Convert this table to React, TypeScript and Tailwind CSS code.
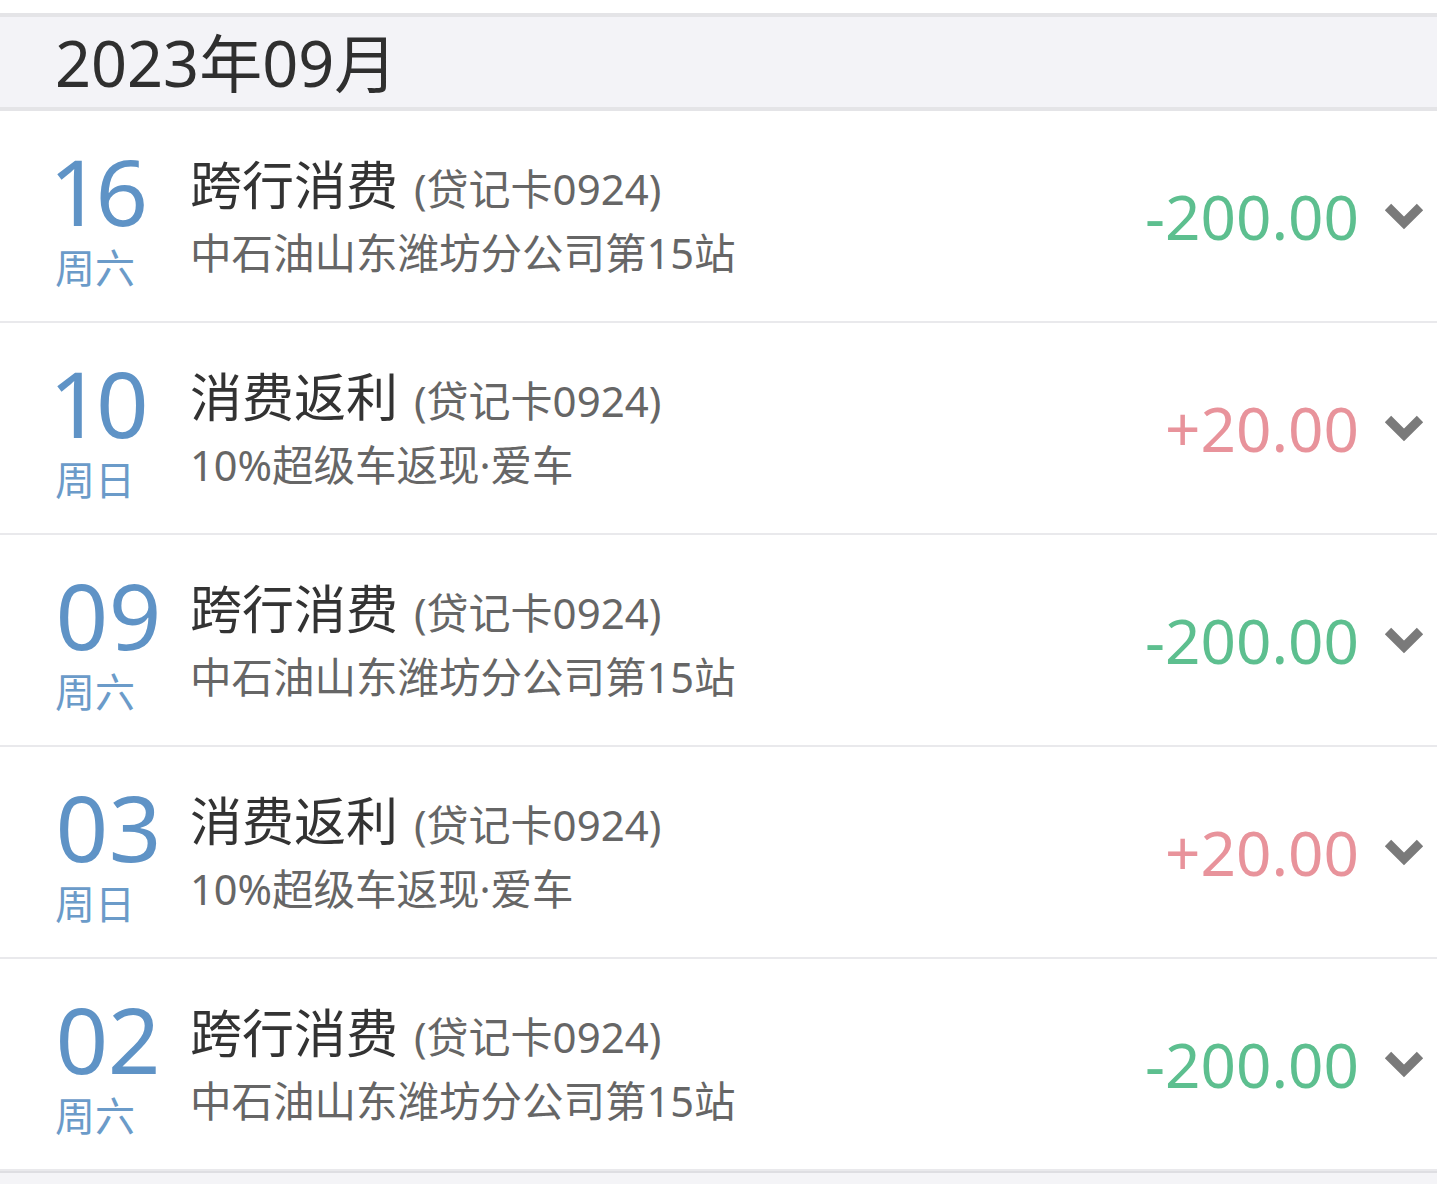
const rows = [
    { day: "16", week: "周六", title: "跨行消费", sub: "中石油山东潍坊分公司第15站", amount: "-200.00", income: false },
    { day: "10", week: "周日", title: "消费返利", sub: "10%超级车返现·爱车", amount: "+20.00", income: true },
    { day: "09", week: "周六", title: "跨行消费", sub: "中石油山东潍坊分公司第15站", amount: "-200.00", income: false },
    { day: "03", week: "周日", title: "消费返利", sub: "10%超级车返现·爱车", amount: "+20.00", income: true },
    { day: "02", week: "周六", title: "跨行消费", sub: "中石油山东潍坊分公司第15站", amount: "-200.00", income: false },
]

const font = { fontFamily: '"Noto Sans", "Noto Sans CJK SC", sans-serif' }

function Chevron() {
    return <svg width="42" height="28" viewBox="0 0 42 28" className="shrink-0">
        <polyline points="5,5 21,21 37,5" fill="none" stroke="#7a7a7a" strokeWidth="9" strokeLinejoin="miter" />
    </svg>
}

function Row({ r }: { r: typeof rows[number] }) {
    return <div className="flex h-[212px] items-start border-b-2 border-[#e9e9ec] bg-white pl-[55px] pr-[12px]">
        <div className="flex w-[135px] shrink-0 flex-col pt-[34px]">
            <div className="text-[92px] leading-[92px] text-[#5f93c6] proportional-nums">{r.day}</div>
            <div className="mt-[7px] text-[40px] leading-[48px] text-[#6b9bc9]">{r.week}</div>
        </div>
        <div className="flex flex-1 flex-col pt-[44px]">
            <div className="flex items-baseline whitespace-nowrap">
                <span className="text-[52px] leading-[60px] text-[#333333]">{r.title}</span>
                <span className="ml-[16px] text-[42px] leading-[60px] text-[#666666]">(贷记卡0924)</span>
            </div>
            <div className="mt-[9px] whitespace-nowrap text-[41.5px] leading-[50px] text-[#666666]">{r.sub}</div>
        </div>
        <div className="flex h-full items-center gap-[24px]">
            <span className={"text-[62px] leading-none " + (r.income ? "text-[#e8939b]" : "text-[#5dbf8f]")}>{r.amount}</span>
            <Chevron />
        </div>
    </div>
}

export default function App() {
    return <div style={font} className="min-h-[1184px] w-[1437px] bg-[#f4f4f7]">
        <div className="h-[13px] bg-white" />
        <div className="flex h-[98px] items-center border-y-4 border-[#e4e4e7] bg-[#f3f3f7] pl-[55px]">
            <span className="text-[63px] leading-none text-[#2f2f2f]">2023年09月</span>
        </div>
        {rows.map((r, i) => <Row key={i} r={r} />)}
        <div className="h-[2px] bg-[#dedee2]" />
    </div>
}
